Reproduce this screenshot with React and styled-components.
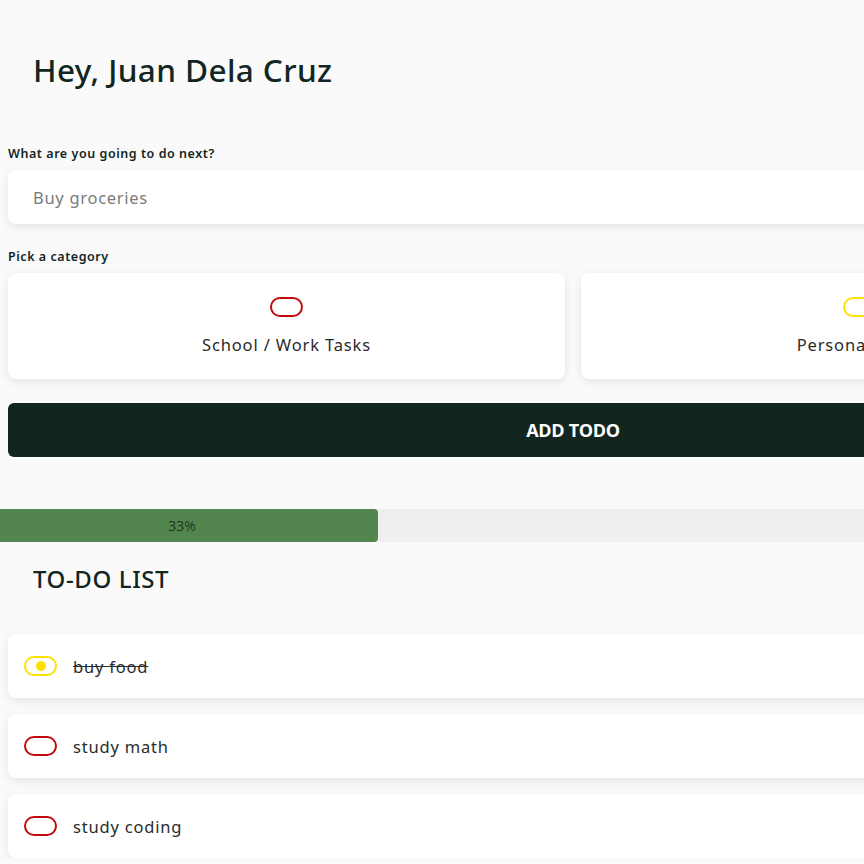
import styled, { createGlobalStyle } from "styled-components";

const GlobalStyle = createGlobalStyle`
  body {
    margin: 0;
    background: #fafafa;
    font-family: "Noto Sans", "Open Sans", sans-serif;
    color: #12261f;
  }
`;

const todos = [
  { id: 1, text: "buy food", category: "personal", done: true },
  { id: 2, text: "study math", category: "work", done: false },
  { id: 3, text: "study coding", category: "work", done: false },
];

const colors = {
  work: "#c20a0a",
  personal: "#ffe100",
};

const App = () => {
  const doneCount = todos.filter((t) => t.done).length;
  const percent = Math.round((doneCount / todos.length) * 100);

  return (
    <Page>
      <GlobalStyle />
      <Form>
        <Greeting>Hey, Juan Dela Cruz</Greeting>
        <Label htmlFor="todo-input">What are you going to do next?</Label>
        <Input id="todo-input" placeholder="Buy groceries" />
        <Label as="p">Pick a category</Label>
        <Categories>
          <CategoryCard>
            <Pill $color={colors.work} />
            <CategoryName>School / Work Tasks</CategoryName>
          </CategoryCard>
          <CategoryCard>
            <Pill $color={colors.personal} />
            <CategoryName>Personal Tasks</CategoryName>
          </CategoryCard>
        </Categories>
        <AddButton>ADD TODO</AddButton>
      </Form>

      <Progress>
        <ProgressFill style={{ width: `${percent}%` }}>{percent}%</ProgressFill>
      </Progress>

      <ListSection>
        <ListTitle>TO-DO LIST</ListTitle>
        <TodoList>
          {todos.map((todo) => (
            <TodoItem key={todo.id}>
              <Pill $color={colors[todo.category]} $checked={todo.done} />
              <TodoText $done={todo.done}>{todo.text}</TodoText>
            </TodoItem>
          ))}
        </TodoList>
      </ListSection>
    </Page>
  );
};
export default App;

const Page = styled.div`
  width: 1146px;
`;

const Form = styled.div`
  padding: 0 8px;
  display: flex;
  flex-direction: column;
`;

const Greeting = styled.h1`
  font-family: "Noto Sans", sans-serif;
  font-size: 31.5px;
  font-weight: 500;
  letter-spacing: 0.4px;
  margin: 48px 0 0 25px;
  line-height: 44px;
  color: #12261f;
`;

const Label = styled.label`
  font-family: "Noto Sans", sans-serif;
  font-size: 12.5px;
  font-weight: 600;
  letter-spacing: 0.55px;
  color: #12261f;
  margin: 53px 0 8px;
  line-height: 17px;

  & + input + p {
    margin-top: 24px;
  }
`;

const Input = styled.input`
  height: 54px;
  border: none;
  border-radius: 8px;
  background: #fff;
  box-shadow: 0 3px 10px rgba(0, 0, 0, 0.09);
  padding: 0 25px;
  font-family: "Noto Sans", sans-serif;
  font-size: 16.5px;
  letter-spacing: 0.7px;
  color: #333;
  outline: none;

  &::placeholder {
    color: #7a7a7a;
  }
`;

const Categories = styled.div`
  display: grid;
  grid-template-columns: 1fr 1fr;
  gap: 16px;
`;

const CategoryCard = styled.button`
  height: 106px;
  border: none;
  border-radius: 8px;
  background: #fff;
  box-shadow: 0 3px 10px rgba(0, 0, 0, 0.09);
  display: flex;
  flex-direction: column;
  align-items: center;
  padding-top: 24px;
  gap: 16px;
  cursor: pointer;
`;

const CategoryName = styled.span`
  font-family: "Noto Sans", sans-serif;
  font-size: 16.5px;
  color: #2b2b2b;
  letter-spacing: 0.85px;
`;

const Pill = styled.span`
  flex: none;
  box-sizing: border-box;
  width: 33px;
  height: 20px;
  border: 2px solid ${(p) => p.$color};
  border-radius: 10px;
  display: flex;
  align-items: center;
  justify-content: center;

  &::after {
    content: "";
    display: ${(p) => (p.$checked ? "block" : "none")};
    width: 10px;
    height: 10px;
    border-radius: 50%;
    background: ${(p) => p.$color};
  }
`;

const AddButton = styled.button`
  margin-top: 24px;
  height: 54px;
  border: none;
  border-radius: 6px;
  background: #12261f;
  color: #fff;
  font-family: "Open Sans", sans-serif;
  font-weight: 700;
  font-size: 18px;
  letter-spacing: -0.3px;
  cursor: pointer;
`;

const Progress = styled.div`
  margin-top: 52px;
  height: 33px;
  background: #efefef;
`;

const ProgressFill = styled.div`
  height: 100%;
  background: #53854f;
  border-radius: 0 4px 4px 0;
  display: flex;
  align-items: center;
  justify-content: center;
  padding-right: 14px;
  box-sizing: border-box;
  font-family: "Open Sans", sans-serif;
  font-size: 14px;
  color: #1c3620;
`;

const ListSection = styled.section`
  padding: 0 8px;
`;

const ListTitle = styled.h2`
  font-family: "Noto Sans", sans-serif;
  font-size: 24px;
  font-weight: 500;
  letter-spacing: 0.6px;
  line-height: 32px;
  margin: 21px 0 0 25px;
  color: #12261f;
`;

const TodoList = styled.div`
  margin-top: 39px;
  display: flex;
  flex-direction: column;
  gap: 16px;
`;

const TodoItem = styled.div`
  height: 64px;
  background: #fff;
  border-radius: 8px;
  box-shadow: 0 3px 10px rgba(0, 0, 0, 0.09);
  display: flex;
  align-items: center;
  padding: 0 16px;
  gap: 16px;
`;

const TodoText = styled.span`
  font-family: "Noto Sans", sans-serif;
  font-size: 16.5px;
  letter-spacing: 0.8px;
  color: #2b2b2b;
  text-decoration: ${(p) => (p.$done ? "line-through" : "none")};
`;
